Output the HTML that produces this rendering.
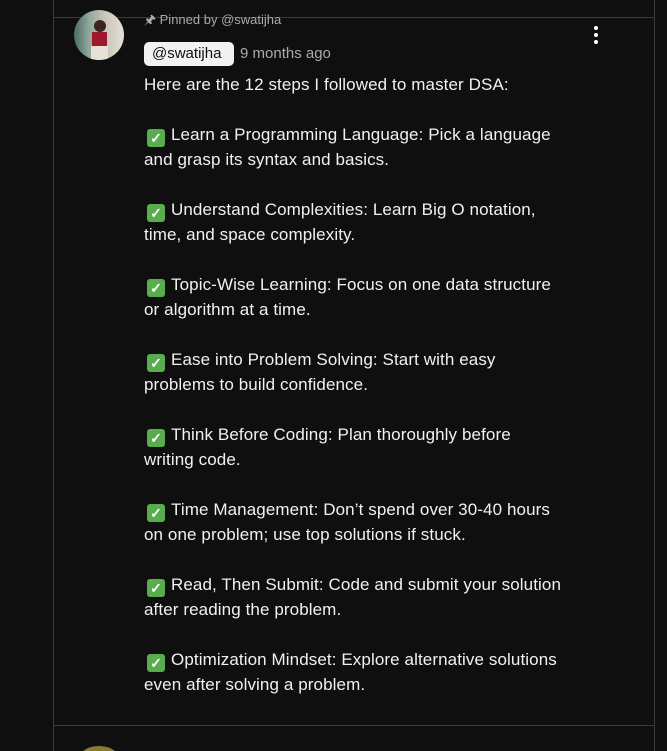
<!DOCTYPE html>
<html><head><meta charset="utf-8"><style>
*{margin:0;padding:0;box-sizing:border-box}
html,body{width:667px;height:751px;overflow:hidden}
body{background:#0f0f0f;position:relative;font-family:"Liberation Sans",Arial,sans-serif;color:#f1f1f1}
.vl{position:absolute;top:0;width:1px;height:751px;background:#3a3a3a}
.hl{position:absolute;left:53px;width:602px;height:1px;background:#3a3a3a}
.av{position:absolute;left:74px;top:10px;width:50px;height:50px;border-radius:50%;overflow:hidden;background:linear-gradient(90deg,#4a6e62 0,#8fa79c 30%,#c9c4b8 60%,#e3e0d6 100%)}
.pin{position:absolute;left:144px;top:11px;font-size:13px;color:#aaa}
.chip{position:absolute;left:144px;top:42px;height:24px;width:90px;background:#f1f1f1;color:#0f0f0f;border-radius:5px;font-size:15px;line-height:24px;padding-left:8px}
.time{position:absolute;left:240px;top:42px;line-height:24px;font-size:15px;color:#aaa}
.txt{position:absolute;left:144px;top:72px;font-size:17px;line-height:25px;white-space:nowrap;color:#f1f1f1;letter-spacing:0.1px}
.ck{display:inline-block;width:18px;height:18px;background:#5aad4e;border-radius:3px;color:#fff;font-size:14px;line-height:18px;text-align:center;vertical-align:-3px;margin:0 6px 0 3px;font-weight:bold}
.dot{position:absolute;left:594px;width:4px;height:4px;border-radius:50%;background:#fff}
</style></head><body>
<div class="vl" style="left:53px"></div>
<div class="vl" style="left:654px"></div>
<div class="hl" style="top:17px"></div>
<div class="hl" style="top:725px"></div>
<div class="av"><div style="position:absolute;left:20px;top:10px;width:12px;height:12px;border-radius:50%;background:#3a2420"></div><div style="position:absolute;left:18px;top:22px;width:15px;height:14px;background:#a01830"></div><div style="position:absolute;left:17px;top:36px;width:17px;height:14px;background:#e8e2d6"></div></div>
<div style="position:absolute;left:81px;top:746px;width:36px;height:20px;border-radius:50%;background:#8a7a30"></div>
<div class="pin">&#x1F588;&#xFE0E; Pinned by @swatijha</div>
<div class="chip">@swatijha</div>
<div class="time">9 months ago</div>
<div class="dot" style="top:26px"></div><div class="dot" style="top:33px"></div><div class="dot" style="top:40px"></div>
<div class="txt">Here are the 12 steps I followed to master DSA:<br><br>
<span class="ck">✓</span>Learn a Programming Language: Pick a language<br>and grasp its syntax and basics.<br><br>
<span class="ck">✓</span>Understand Complexities: Learn Big O notation,<br>time, and space complexity.<br><br>
<span class="ck">✓</span>Topic-Wise Learning: Focus on one data structure<br>or algorithm at a time.<br><br>
<span class="ck">✓</span>Ease into Problem Solving: Start with easy<br>problems to build confidence.<br><br>
<span class="ck">✓</span>Think Before Coding: Plan thoroughly before<br>writing code.<br><br>
<span class="ck">✓</span>Time Management: Don’t spend over 30-40 hours<br>on one problem; use top solutions if stuck.<br><br>
<span class="ck">✓</span>Read, Then Submit: Code and submit your solution<br>after reading the problem.<br><br>
<span class="ck">✓</span>Optimization Mindset: Explore alternative solutions<br>even after solving a problem.</div>
</body></html>
